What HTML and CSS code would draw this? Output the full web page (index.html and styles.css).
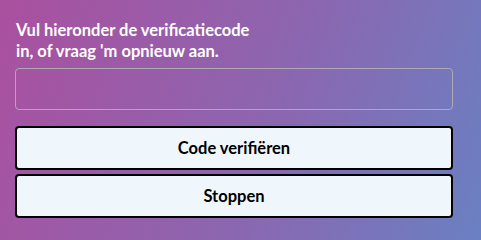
FILE: index.html
```html
<!DOCTYPE html>
<html lang="nl">
<head>
<meta charset="utf-8">
<link rel="stylesheet" href="styles.css">
</head>
<body>
<main class="panel">
  <p class="intro">Vul hieronder de verificatiecode<br>in, of vraag 'm opnieuw aan.</p>
  <input class="code-input" type="text" aria-label="Verificatiecode">
  <div class="actions">
    <button class="btn" type="button">Code verifiëren</button>
    <button class="btn" type="button">Stoppen</button>
  </div>
</main>
</body>
</html>
```
FILE: styles.css
```css
html, body {
  margin: 0;
  height: 100%;
}
body {
  background: linear-gradient(110deg, #aa509f 0%, #8c66b0 55%, #6a80c2 100%);
  font-family: Lato, "Noto Sans", sans-serif;
}
.panel {
  padding: 20px 28px 0 15px;
  display: flex;
  flex-direction: column;
}
.intro {
  margin: 0 0 6px 1px;
  color: #ffffff;
  font-weight: 700;
  font-size: 16.5px;
  line-height: 21px;
}
.code-input {
  box-sizing: border-box;
  height: 42px;
  width: 100%;
  margin: 0;
  border: 1px solid #b0a8b8;
  border-radius: 4px;
  background: transparent;
  outline: none;
}
.actions {
  margin-top: 16px;
  display: flex;
  flex-direction: column;
  gap: 4px;
}
.btn {
  box-sizing: border-box;
  height: 44px;
  width: 100%;
  margin: 0;
  border: 2px solid #000000;
  border-radius: 4px;
  background: #eff7fd;
  color: #000000;
  font-family: Lato, "Noto Sans", sans-serif;
  font-weight: 700;
  font-size: 16.5px;
}
```
